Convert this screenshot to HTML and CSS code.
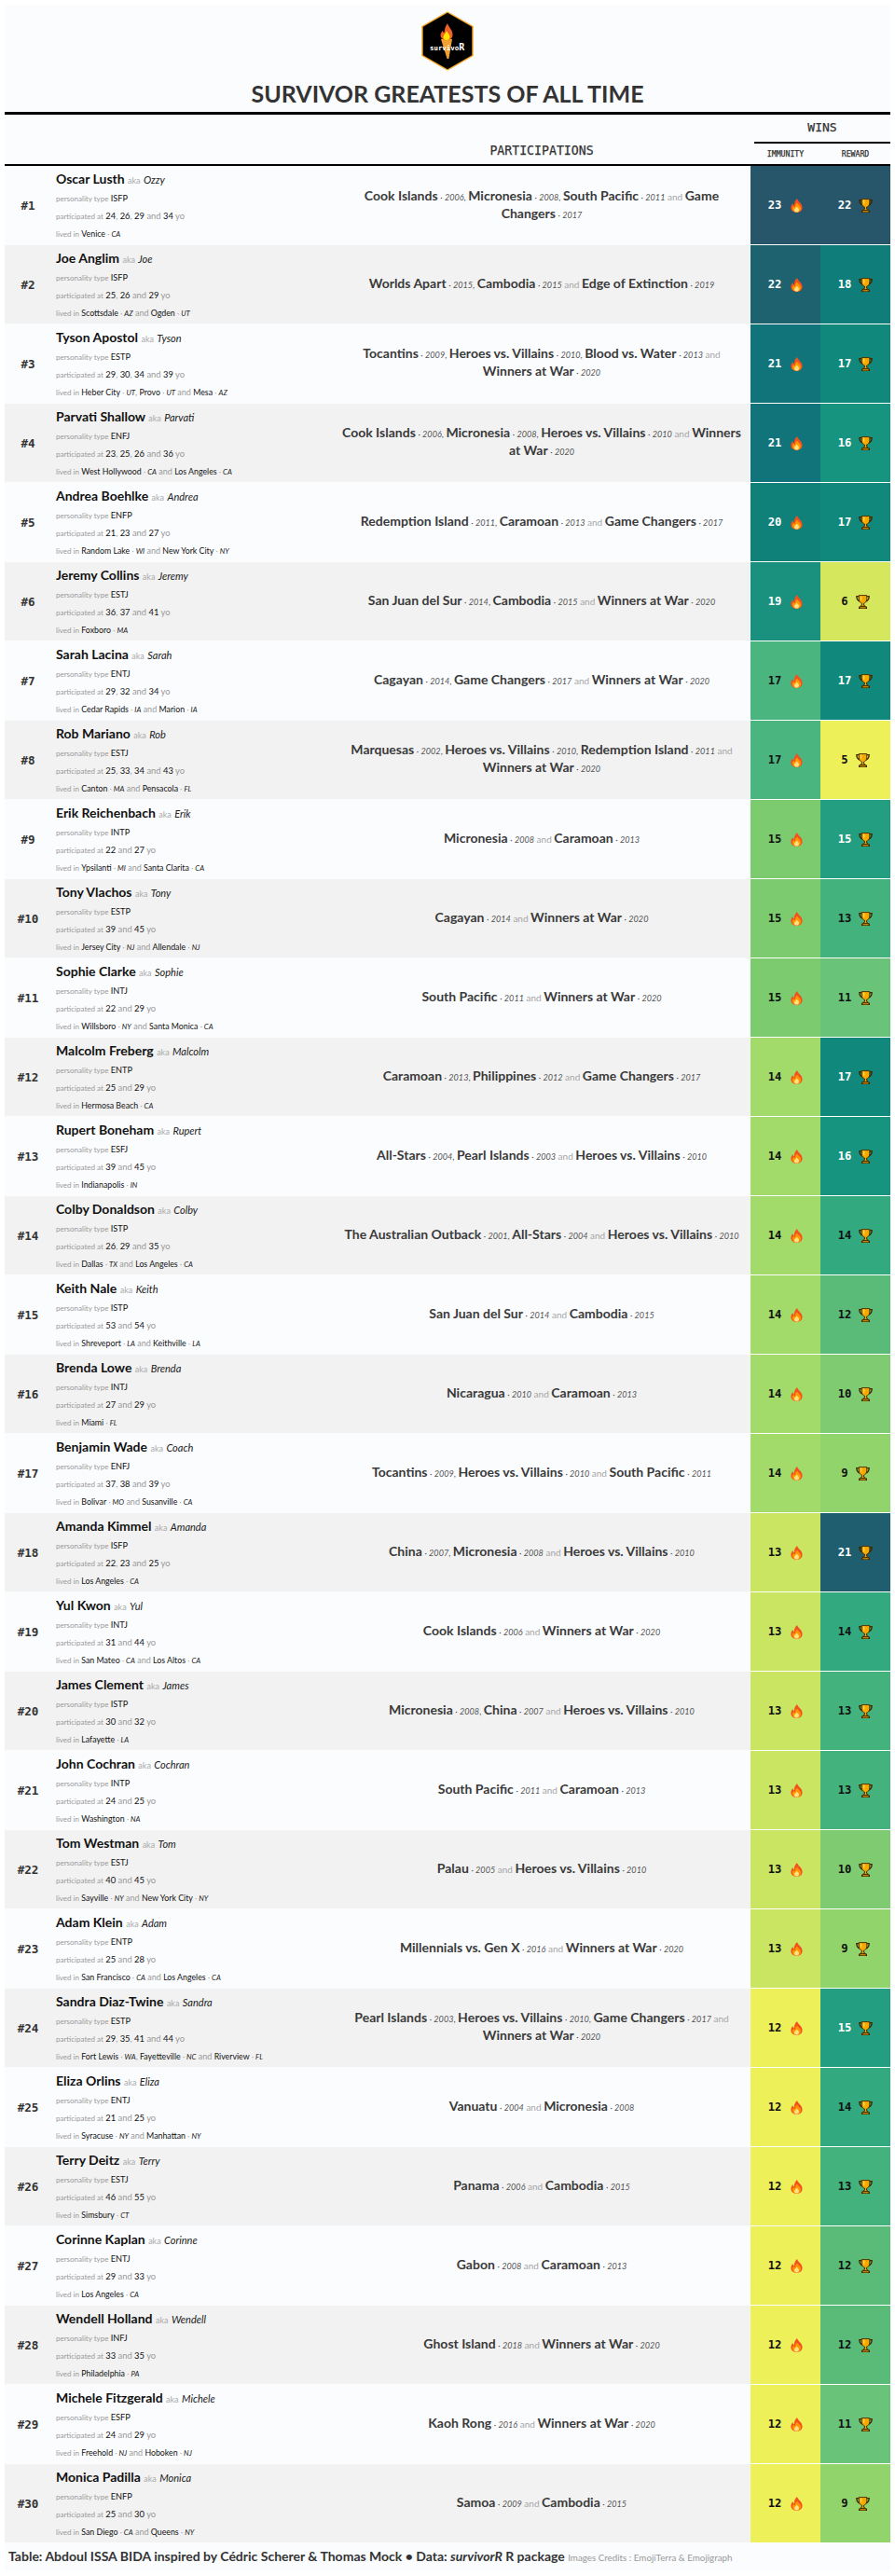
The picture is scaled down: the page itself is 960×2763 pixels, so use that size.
FILE: index.html
```html
<!DOCTYPE html>
<html lang="en">
<head>
    <meta charset="UTF-8">
    <meta name="viewport" content="width=device-width, initial-scale=1.0">
    <title>Survivor Greatests of All Time</title>
    <link rel="stylesheet" href="styles.css">
</head>
<body>
    <svg class="defs" width="0" height="0">
        <symbol id="fire" viewBox="0 0 13 15">
            <path fill="#f4511e" d="M7 0C7.5 3 12.6 5 12.6 9.6 12.6 13 10 15 6.5 15 3 15 .4 13 .4 9.6 .4 7.5 1.5 6 2.5 5 2.5 6.5 3.2 7.2 4 7.3 3.6 4.5 5 1.5 7 0Z"/>
            <path fill="#ff9800" d="M7 4.5C7.6 6.5 11 7.6 11 10.4 11 13 9 14.6 6.5 14.6 4 14.6 2 13 2 10.6 2 9.4 2.6 8.6 3.4 8 3.6 8.8 4.2 9.2 4.8 9.2 4.8 7.4 5.6 5.6 7 4.5Z"/>
            <path fill="#ffe082" d="M6.7 8.6C7 9.8 9 10.4 9 12 9 13.6 7.9 14.6 6.5 14.6 5.1 14.6 4 13.6 4 12.2 4 10.8 5.8 10.2 6.7 8.6Z"/>
        </symbol>
        <symbol id="trophy" viewBox="0 0 15 15">
            <path fill="none" stroke="#3e2700" stroke-width="1.3" d="M3.5 1.6H.8C.8 5 2.4 6.6 4.6 7.2M11.5 1.6H14.2C14.2 5 12.6 6.6 10.4 7.2"/>
            <path fill="#f5a800" stroke="#3e2700" stroke-width=".9" d="M3.2 .6H11.8V4.6C11.8 7.4 9.8 8.8 8.5 9.2V11.2H9.4L10.4 12.6H4.6L5.6 11.2H6.5V9.2C5.2 8.8 3.2 7.4 3.2 4.6Z"/>
            <path fill="#ffd54f" d="M5 1.4H6.4V6.6C5.4 6 5 5 5 4Z"/>
            <rect fill="#3e2700" x="3" y="12.6" width="9" height="2.4"/>
            <rect fill="#f5a800" x="4.4" y="13.3" width="6.2" height="1"/>
        </symbol>
    </svg>

    <div class="panel">
        <div class="heading">
            <svg class="logo" width="56" height="64" viewBox="0 0 56 64">
                <polygon fill="#000" stroke="#f5a623" stroke-width="1.4" points="28,1 55,16.5 55,47.5 28,63 1,47.5 1,16.5"/>
                <path fill="#f0a030" d="M21 30H33L29.4 51H27.6Z"/>
                <path fill="#f0622a" d="M28 13C29 17 33.5 20 33.5 25 33.5 29 31 31 27 31 23 31 20.5 29 20.5 25.5 20.5 23.5 22 22 23 21 23 22.5 24 23 24.6 23 24.6 19.5 26 16 28 13Z"/>
                <path fill="#ffe600" d="M27.2 21C27.6 23 30.5 24.5 30.5 27.5 30.5 30 29 31 27 31 25 31 23.5 30 23.5 27.8 23.5 25.4 26 24 27.2 21Z"/>
                <text class="logo-text" x="9" y="42">survivo<tspan class="logo-r">R</tspan></text>
            </svg>
            <h1>SURVIVOR GREATESTS OF ALL TIME</h1>
        </div>

        <table class="board">
            <colgroup>
                <col class="c-rank"><col class="c-who"><col class="c-part"><col class="c-win"><col class="c-win">
            </colgroup>
            <thead>
                <tr class="head-top">
                    <th rowspan="2"></th>
                    <th rowspan="2"></th>
                    <th rowspan="2" class="head-part">PARTICIPATIONS</th>
                    <th colspan="2" class="head-wins"><span>WINS</span></th>
                </tr>
                <tr class="head-sub">
                    <th>IMMUNITY</th>
                    <th>REWARD</th>
                </tr>
            </thead>
            <tbody>
                <tr>
                    <td class="rank">#1</td>
                    <td class="who"><p class="name">Oscar Lusth <span>aka</span> <em>Ozzy</em></p><p class="line"><small>personality type</small> <b class="type">ISFP</b></p><p class="line ages"><small>participated at</small> <b>24</b>, <b>26</b>, <b>29</b> and <b>34</b> yo</p><p class="line"><small>lived in</small> <b>Venice</b> <small>· <em>CA</em></small></p></td>
                    <td class="part"><b>Cook Islands</b> <small>· <em>2006</em>,</small> <b>Micronesia</b> <small>· <em>2008</em>,</small> <b>South Pacific</b> <small>· <em>2011</em></small> and <b>Game Changers</b> <small>· <em>2017</em></small></td>
                    <td class="win i23">23<svg class="fire"><use href="#fire"/></svg></td>
                    <td class="win r22">22<svg class="trophy"><use href="#trophy"/></svg></td>
                </tr>
                <tr>
                    <td class="rank">#2</td>
                    <td class="who"><p class="name">Joe Anglim <span>aka</span> <em>Joe</em></p><p class="line"><small>personality type</small> <b class="type">ISFP</b></p><p class="line ages"><small>participated at</small> <b>25</b>, <b>26</b> and <b>29</b> yo</p><p class="line"><small>lived in</small> <b>Scottsdale</b> <small>· <em>AZ</em></small> and <b>Ogden</b> <small>· <em>UT</em></small></p></td>
                    <td class="part"><b>Worlds Apart</b> <small>· <em>2015</em>,</small> <b>Cambodia</b> <small>· <em>2015</em></small> and <b>Edge of Extinction</b> <small>· <em>2019</em></small></td>
                    <td class="win i22">22<svg class="fire"><use href="#fire"/></svg></td>
                    <td class="win r18">18<svg class="trophy"><use href="#trophy"/></svg></td>
                </tr>
                <tr>
                    <td class="rank">#3</td>
                    <td class="who"><p class="name">Tyson Apostol <span>aka</span> <em>Tyson</em></p><p class="line"><small>personality type</small> <b class="type">ESTP</b></p><p class="line ages"><small>participated at</small> <b>29</b>, <b>30</b>, <b>34</b> and <b>39</b> yo</p><p class="line"><small>lived in</small> <b>Heber City</b> <small>· <em>UT</em></small>, <b>Provo</b> <small>· <em>UT</em></small> and <b>Mesa</b> <small>· <em>AZ</em></small></p></td>
                    <td class="part"><b>Tocantins</b> <small>· <em>2009</em>,</small> <b>Heroes vs. Villains</b> <small>· <em>2010</em>,</small> <b>Blood vs. Water</b> <small>· <em>2013</em></small> and <b>Winners at War</b> <small>· <em>2020</em></small></td>
                    <td class="win i21">21<svg class="fire"><use href="#fire"/></svg></td>
                    <td class="win r17">17<svg class="trophy"><use href="#trophy"/></svg></td>
                </tr>
                <tr>
                    <td class="rank">#4</td>
                    <td class="who"><p class="name">Parvati Shallow <span>aka</span> <em>Parvati</em></p><p class="line"><small>personality type</small> <b class="type">ENFJ</b></p><p class="line ages"><small>participated at</small> <b>23</b>, <b>25</b>, <b>26</b> and <b>36</b> yo</p><p class="line"><small>lived in</small> <b>West Hollywood</b> <small>· <em>CA</em></small> and <b>Los Angeles</b> <small>· <em>CA</em></small></p></td>
                    <td class="part"><b>Cook Islands</b> <small>· <em>2006</em>,</small> <b>Micronesia</b> <small>· <em>2008</em>,</small> <b>Heroes vs. Villains</b> <small>· <em>2010</em></small> and <b>Winners at War</b> <small>· <em>2020</em></small></td>
                    <td class="win i21">21<svg class="fire"><use href="#fire"/></svg></td>
                    <td class="win r16">16<svg class="trophy"><use href="#trophy"/></svg></td>
                </tr>
                <tr>
                    <td class="rank">#5</td>
                    <td class="who"><p class="name">Andrea Boehlke <span>aka</span> <em>Andrea</em></p><p class="line"><small>personality type</small> <b class="type">ENFP</b></p><p class="line ages"><small>participated at</small> <b>21</b>, <b>23</b> and <b>27</b> yo</p><p class="line"><small>lived in</small> <b>Random Lake</b> <small>· <em>WI</em></small> and <b>New York City</b> <small>· <em>NY</em></small></p></td>
                    <td class="part"><b>Redemption Island</b> <small>· <em>2011</em>,</small> <b>Caramoan</b> <small>· <em>2013</em></small> and <b>Game Changers</b> <small>· <em>2017</em></small></td>
                    <td class="win i20">20<svg class="fire"><use href="#fire"/></svg></td>
                    <td class="win r17">17<svg class="trophy"><use href="#trophy"/></svg></td>
                </tr>
                <tr>
                    <td class="rank">#6</td>
                    <td class="who"><p class="name">Jeremy Collins <span>aka</span> <em>Jeremy</em></p><p class="line"><small>personality type</small> <b class="type">ESTJ</b></p><p class="line ages"><small>participated at</small> <b>36</b>, <b>37</b> and <b>41</b> yo</p><p class="line"><small>lived in</small> <b>Foxboro</b> <small>· <em>MA</em></small></p></td>
                    <td class="part"><b>San Juan del Sur</b> <small>· <em>2014</em>,</small> <b>Cambodia</b> <small>· <em>2015</em></small> and <b>Winners at War</b> <small>· <em>2020</em></small></td>
                    <td class="win i19">19<svg class="fire"><use href="#fire"/></svg></td>
                    <td class="win r6">6<svg class="trophy"><use href="#trophy"/></svg></td>
                </tr>
                <tr>
                    <td class="rank">#7</td>
                    <td class="who"><p class="name">Sarah Lacina <span>aka</span> <em>Sarah</em></p><p class="line"><small>personality type</small> <b class="type">ENTJ</b></p><p class="line ages"><small>participated at</small> <b>29</b>, <b>32</b> and <b>34</b> yo</p><p class="line"><small>lived in</small> <b>Cedar Rapids</b> <small>· <em>IA</em></small> and <b>Marion</b> <small>· <em>IA</em></small></p></td>
                    <td class="part"><b>Cagayan</b> <small>· <em>2014</em>,</small> <b>Game Changers</b> <small>· <em>2017</em></small> and <b>Winners at War</b> <small>· <em>2020</em></small></td>
                    <td class="win i17">17<svg class="fire"><use href="#fire"/></svg></td>
                    <td class="win r17">17<svg class="trophy"><use href="#trophy"/></svg></td>
                </tr>
                <tr>
                    <td class="rank">#8</td>
                    <td class="who"><p class="name">Rob Mariano <span>aka</span> <em>Rob</em></p><p class="line"><small>personality type</small> <b class="type">ESTJ</b></p><p class="line ages"><small>participated at</small> <b>25</b>, <b>33</b>, <b>34</b> and <b>43</b> yo</p><p class="line"><small>lived in</small> <b>Canton</b> <small>· <em>MA</em></small> and <b>Pensacola</b> <small>· <em>FL</em></small></p></td>
                    <td class="part"><b>Marquesas</b> <small>· <em>2002</em>,</small> <b>Heroes vs. Villains</b> <small>· <em>2010</em>,</small> <b>Redemption Island</b> <small>· <em>2011</em></small> and <b>Winners at War</b> <small>· <em>2020</em></small></td>
                    <td class="win i17">17<svg class="fire"><use href="#fire"/></svg></td>
                    <td class="win r5">5<svg class="trophy"><use href="#trophy"/></svg></td>
                </tr>
                <tr>
                    <td class="rank">#9</td>
                    <td class="who"><p class="name">Erik Reichenbach <span>aka</span> <em>Erik</em></p><p class="line"><small>personality type</small> <b class="type">INTP</b></p><p class="line ages"><small>participated at</small> <b>22</b> and <b>27</b> yo</p><p class="line"><small>lived in</small> <b>Ypsilanti</b> <small>· <em>MI</em></small> and <b>Santa Clarita</b> <small>· <em>CA</em></small></p></td>
                    <td class="part"><b>Micronesia</b> <small>· <em>2008</em></small> and <b>Caramoan</b> <small>· <em>2013</em></small></td>
                    <td class="win i15">15<svg class="fire"><use href="#fire"/></svg></td>
                    <td class="win r15">15<svg class="trophy"><use href="#trophy"/></svg></td>
                </tr>
                <tr>
                    <td class="rank">#10</td>
                    <td class="who"><p class="name">Tony Vlachos <span>aka</span> <em>Tony</em></p><p class="line"><small>personality type</small> <b class="type">ESTP</b></p><p class="line ages"><small>participated at</small> <b>39</b> and <b>45</b> yo</p><p class="line"><small>lived in</small> <b>Jersey City</b> <small>· <em>NJ</em></small> and <b>Allendale</b> <small>· <em>NJ</em></small></p></td>
                    <td class="part"><b>Cagayan</b> <small>· <em>2014</em></small> and <b>Winners at War</b> <small>· <em>2020</em></small></td>
                    <td class="win i15">15<svg class="fire"><use href="#fire"/></svg></td>
                    <td class="win r13">13<svg class="trophy"><use href="#trophy"/></svg></td>
                </tr>
                <tr>
                    <td class="rank">#11</td>
                    <td class="who"><p class="name">Sophie Clarke <span>aka</span> <em>Sophie</em></p><p class="line"><small>personality type</small> <b class="type">INTJ</b></p><p class="line ages"><small>participated at</small> <b>22</b> and <b>29</b> yo</p><p class="line"><small>lived in</small> <b>Willsboro</b> <small>· <em>NY</em></small> and <b>Santa Monica</b> <small>· <em>CA</em></small></p></td>
                    <td class="part"><b>South Pacific</b> <small>· <em>2011</em></small> and <b>Winners at War</b> <small>· <em>2020</em></small></td>
                    <td class="win i15">15<svg class="fire"><use href="#fire"/></svg></td>
                    <td class="win r11">11<svg class="trophy"><use href="#trophy"/></svg></td>
                </tr>
                <tr>
                    <td class="rank">#12</td>
                    <td class="who"><p class="name">Malcolm Freberg <span>aka</span> <em>Malcolm</em></p><p class="line"><small>personality type</small> <b class="type">ENTP</b></p><p class="line ages"><small>participated at</small> <b>25</b> and <b>29</b> yo</p><p class="line"><small>lived in</small> <b>Hermosa Beach</b> <small>· <em>CA</em></small></p></td>
                    <td class="part"><b>Caramoan</b> <small>· <em>2013</em>,</small> <b>Philippines</b> <small>· <em>2012</em></small> and <b>Game Changers</b> <small>· <em>2017</em></small></td>
                    <td class="win i14">14<svg class="fire"><use href="#fire"/></svg></td>
                    <td class="win r17">17<svg class="trophy"><use href="#trophy"/></svg></td>
                </tr>
                <tr>
                    <td class="rank">#13</td>
                    <td class="who"><p class="name">Rupert Boneham <span>aka</span> <em>Rupert</em></p><p class="line"><small>personality type</small> <b class="type">ESFJ</b></p><p class="line ages"><small>participated at</small> <b>39</b> and <b>45</b> yo</p><p class="line"><small>lived in</small> <b>Indianapolis</b> <small>· <em>IN</em></small></p></td>
                    <td class="part"><b>All-Stars</b> <small>· <em>2004</em>,</small> <b>Pearl Islands</b> <small>· <em>2003</em></small> and <b>Heroes vs. Villains</b> <small>· <em>2010</em></small></td>
                    <td class="win i14">14<svg class="fire"><use href="#fire"/></svg></td>
                    <td class="win r16">16<svg class="trophy"><use href="#trophy"/></svg></td>
                </tr>
                <tr>
                    <td class="rank">#14</td>
                    <td class="who"><p class="name">Colby Donaldson <span>aka</span> <em>Colby</em></p><p class="line"><small>personality type</small> <b class="type">ISTP</b></p><p class="line ages"><small>participated at</small> <b>26</b>, <b>29</b> and <b>35</b> yo</p><p class="line"><small>lived in</small> <b>Dallas</b> <small>· <em>TX</em></small> and <b>Los Angeles</b> <small>· <em>CA</em></small></p></td>
                    <td class="part"><b>The Australian Outback</b> <small>· <em>2001</em>,</small> <b>All-Stars</b> <small>· <em>2004</em></small> and <b>Heroes vs. Villains</b> <small>· <em>2010</em></small></td>
                    <td class="win i14">14<svg class="fire"><use href="#fire"/></svg></td>
                    <td class="win r14">14<svg class="trophy"><use href="#trophy"/></svg></td>
                </tr>
                <tr>
                    <td class="rank">#15</td>
                    <td class="who"><p class="name">Keith Nale <span>aka</span> <em>Keith</em></p><p class="line"><small>personality type</small> <b class="type">ISTP</b></p><p class="line ages"><small>participated at</small> <b>53</b> and <b>54</b> yo</p><p class="line"><small>lived in</small> <b>Shreveport</b> <small>· <em>LA</em></small> and <b>Keithville</b> <small>· <em>LA</em></small></p></td>
                    <td class="part"><b>San Juan del Sur</b> <small>· <em>2014</em></small> and <b>Cambodia</b> <small>· <em>2015</em></small></td>
                    <td class="win i14">14<svg class="fire"><use href="#fire"/></svg></td>
                    <td class="win r12">12<svg class="trophy"><use href="#trophy"/></svg></td>
                </tr>
                <tr>
                    <td class="rank">#16</td>
                    <td class="who"><p class="name">Brenda Lowe <span>aka</span> <em>Brenda</em></p><p class="line"><small>personality type</small> <b class="type">INTJ</b></p><p class="line ages"><small>participated at</small> <b>27</b> and <b>29</b> yo</p><p class="line"><small>lived in</small> <b>Miami</b> <small>· <em>FL</em></small></p></td>
                    <td class="part"><b>Nicaragua</b> <small>· <em>2010</em></small> and <b>Caramoan</b> <small>· <em>2013</em></small></td>
                    <td class="win i14">14<svg class="fire"><use href="#fire"/></svg></td>
                    <td class="win r10">10<svg class="trophy"><use href="#trophy"/></svg></td>
                </tr>
                <tr>
                    <td class="rank">#17</td>
                    <td class="who"><p class="name">Benjamin Wade <span>aka</span> <em>Coach</em></p><p class="line"><small>personality type</small> <b class="type">ENFJ</b></p><p class="line ages"><small>participated at</small> <b>37</b>, <b>38</b> and <b>39</b> yo</p><p class="line"><small>lived in</small> <b>Bolivar</b> <small>· <em>MO</em></small> and <b>Susanville</b> <small>· <em>CA</em></small></p></td>
                    <td class="part"><b>Tocantins</b> <small>· <em>2009</em>,</small> <b>Heroes vs. Villains</b> <small>· <em>2010</em></small> and <b>South Pacific</b> <small>· <em>2011</em></small></td>
                    <td class="win i14">14<svg class="fire"><use href="#fire"/></svg></td>
                    <td class="win r9">9<svg class="trophy"><use href="#trophy"/></svg></td>
                </tr>
                <tr>
                    <td class="rank">#18</td>
                    <td class="who"><p class="name">Amanda Kimmel <span>aka</span> <em>Amanda</em></p><p class="line"><small>personality type</small> <b class="type">ISFP</b></p><p class="line ages"><small>participated at</small> <b>22</b>, <b>23</b> and <b>25</b> yo</p><p class="line"><small>lived in</small> <b>Los Angeles</b> <small>· <em>CA</em></small></p></td>
                    <td class="part"><b>China</b> <small>· <em>2007</em>,</small> <b>Micronesia</b> <small>· <em>2008</em></small> and <b>Heroes vs. Villains</b> <small>· <em>2010</em></small></td>
                    <td class="win i13">13<svg class="fire"><use href="#fire"/></svg></td>
                    <td class="win r21">21<svg class="trophy"><use href="#trophy"/></svg></td>
                </tr>
                <tr>
                    <td class="rank">#19</td>
                    <td class="who"><p class="name">Yul Kwon <span>aka</span> <em>Yul</em></p><p class="line"><small>personality type</small> <b class="type">INTJ</b></p><p class="line ages"><small>participated at</small> <b>31</b> and <b>44</b> yo</p><p class="line"><small>lived in</small> <b>San Mateo</b> <small>· <em>CA</em></small> and <b>Los Altos</b> <small>· <em>CA</em></small></p></td>
                    <td class="part"><b>Cook Islands</b> <small>· <em>2006</em></small> and <b>Winners at War</b> <small>· <em>2020</em></small></td>
                    <td class="win i13">13<svg class="fire"><use href="#fire"/></svg></td>
                    <td class="win r14">14<svg class="trophy"><use href="#trophy"/></svg></td>
                </tr>
                <tr>
                    <td class="rank">#20</td>
                    <td class="who"><p class="name">James Clement <span>aka</span> <em>James</em></p><p class="line"><small>personality type</small> <b class="type">ISTP</b></p><p class="line ages"><small>participated at</small> <b>30</b> and <b>32</b> yo</p><p class="line"><small>lived in</small> <b>Lafayette</b> <small>· <em>LA</em></small></p></td>
                    <td class="part"><b>Micronesia</b> <small>· <em>2008</em>,</small> <b>China</b> <small>· <em>2007</em></small> and <b>Heroes vs. Villains</b> <small>· <em>2010</em></small></td>
                    <td class="win i13">13<svg class="fire"><use href="#fire"/></svg></td>
                    <td class="win r13">13<svg class="trophy"><use href="#trophy"/></svg></td>
                </tr>
                <tr>
                    <td class="rank">#21</td>
                    <td class="who"><p class="name">John Cochran <span>aka</span> <em>Cochran</em></p><p class="line"><small>personality type</small> <b class="type">INTP</b></p><p class="line ages"><small>participated at</small> <b>24</b> and <b>25</b> yo</p><p class="line"><small>lived in</small> <b>Washington</b> <small>· <em>NA</em></small></p></td>
                    <td class="part"><b>South Pacific</b> <small>· <em>2011</em></small> and <b>Caramoan</b> <small>· <em>2013</em></small></td>
                    <td class="win i13">13<svg class="fire"><use href="#fire"/></svg></td>
                    <td class="win r13">13<svg class="trophy"><use href="#trophy"/></svg></td>
                </tr>
                <tr>
                    <td class="rank">#22</td>
                    <td class="who"><p class="name">Tom Westman <span>aka</span> <em>Tom</em></p><p class="line"><small>personality type</small> <b class="type">ESTJ</b></p><p class="line ages"><small>participated at</small> <b>40</b> and <b>45</b> yo</p><p class="line"><small>lived in</small> <b>Sayville</b> <small>· <em>NY</em></small> and <b>New York City</b> <small>· <em>NY</em></small></p></td>
                    <td class="part"><b>Palau</b> <small>· <em>2005</em></small> and <b>Heroes vs. Villains</b> <small>· <em>2010</em></small></td>
                    <td class="win i13">13<svg class="fire"><use href="#fire"/></svg></td>
                    <td class="win r10">10<svg class="trophy"><use href="#trophy"/></svg></td>
                </tr>
                <tr>
                    <td class="rank">#23</td>
                    <td class="who"><p class="name">Adam Klein <span>aka</span> <em>Adam</em></p><p class="line"><small>personality type</small> <b class="type">ENTP</b></p><p class="line ages"><small>participated at</small> <b>25</b> and <b>28</b> yo</p><p class="line"><small>lived in</small> <b>San Francisco</b> <small>· <em>CA</em></small> and <b>Los Angeles</b> <small>· <em>CA</em></small></p></td>
                    <td class="part"><b>Millennials vs. Gen X</b> <small>· <em>2016</em></small> and <b>Winners at War</b> <small>· <em>2020</em></small></td>
                    <td class="win i13">13<svg class="fire"><use href="#fire"/></svg></td>
                    <td class="win r9">9<svg class="trophy"><use href="#trophy"/></svg></td>
                </tr>
                <tr>
                    <td class="rank">#24</td>
                    <td class="who"><p class="name">Sandra Diaz-Twine <span>aka</span> <em>Sandra</em></p><p class="line"><small>personality type</small> <b class="type">ESTP</b></p><p class="line ages"><small>participated at</small> <b>29</b>, <b>35</b>, <b>41</b> and <b>44</b> yo</p><p class="line"><small>lived in</small> <b>Fort Lewis</b> <small>· <em>WA</em></small>, <b>Fayetteville</b> <small>· <em>NC</em></small> and <b>Riverview</b> <small>· <em>FL</em></small></p></td>
                    <td class="part"><b>Pearl Islands</b> <small>· <em>2003</em>,</small> <b>Heroes vs. Villains</b> <small>· <em>2010</em>,</small> <b>Game Changers</b> <small>· <em>2017</em></small> and <b>Winners at War</b> <small>· <em>2020</em></small></td>
                    <td class="win i12">12<svg class="fire"><use href="#fire"/></svg></td>
                    <td class="win r15">15<svg class="trophy"><use href="#trophy"/></svg></td>
                </tr>
                <tr>
                    <td class="rank">#25</td>
                    <td class="who"><p class="name">Eliza Orlins <span>aka</span> <em>Eliza</em></p><p class="line"><small>personality type</small> <b class="type">ENTJ</b></p><p class="line ages"><small>participated at</small> <b>21</b> and <b>25</b> yo</p><p class="line"><small>lived in</small> <b>Syracuse</b> <small>· <em>NY</em></small> and <b>Manhattan</b> <small>· <em>NY</em></small></p></td>
                    <td class="part"><b>Vanuatu</b> <small>· <em>2004</em></small> and <b>Micronesia</b> <small>· <em>2008</em></small></td>
                    <td class="win i12">12<svg class="fire"><use href="#fire"/></svg></td>
                    <td class="win r14">14<svg class="trophy"><use href="#trophy"/></svg></td>
                </tr>
                <tr>
                    <td class="rank">#26</td>
                    <td class="who"><p class="name">Terry Deitz <span>aka</span> <em>Terry</em></p><p class="line"><small>personality type</small> <b class="type">ESTJ</b></p><p class="line ages"><small>participated at</small> <b>46</b> and <b>55</b> yo</p><p class="line"><small>lived in</small> <b>Simsbury</b> <small>· <em>CT</em></small></p></td>
                    <td class="part"><b>Panama</b> <small>· <em>2006</em></small> and <b>Cambodia</b> <small>· <em>2015</em></small></td>
                    <td class="win i12">12<svg class="fire"><use href="#fire"/></svg></td>
                    <td class="win r13">13<svg class="trophy"><use href="#trophy"/></svg></td>
                </tr>
                <tr>
                    <td class="rank">#27</td>
                    <td class="who"><p class="name">Corinne Kaplan <span>aka</span> <em>Corinne</em></p><p class="line"><small>personality type</small> <b class="type">ENTJ</b></p><p class="line ages"><small>participated at</small> <b>29</b> and <b>33</b> yo</p><p class="line"><small>lived in</small> <b>Los Angeles</b> <small>· <em>CA</em></small></p></td>
                    <td class="part"><b>Gabon</b> <small>· <em>2008</em></small> and <b>Caramoan</b> <small>· <em>2013</em></small></td>
                    <td class="win i12">12<svg class="fire"><use href="#fire"/></svg></td>
                    <td class="win r12">12<svg class="trophy"><use href="#trophy"/></svg></td>
                </tr>
                <tr>
                    <td class="rank">#28</td>
                    <td class="who"><p class="name">Wendell Holland <span>aka</span> <em>Wendell</em></p><p class="line"><small>personality type</small> <b class="type">INFJ</b></p><p class="line ages"><small>participated at</small> <b>33</b> and <b>35</b> yo</p><p class="line"><small>lived in</small> <b>Philadelphia</b> <small>· <em>PA</em></small></p></td>
                    <td class="part"><b>Ghost Island</b> <small>· <em>2018</em></small> and <b>Winners at War</b> <small>· <em>2020</em></small></td>
                    <td class="win i12">12<svg class="fire"><use href="#fire"/></svg></td>
                    <td class="win r12">12<svg class="trophy"><use href="#trophy"/></svg></td>
                </tr>
                <tr>
                    <td class="rank">#29</td>
                    <td class="who"><p class="name">Michele Fitzgerald <span>aka</span> <em>Michele</em></p><p class="line"><small>personality type</small> <b class="type">ESFP</b></p><p class="line ages"><small>participated at</small> <b>24</b> and <b>29</b> yo</p><p class="line"><small>lived in</small> <b>Freehold</b> <small>· <em>NJ</em></small> and <b>Hoboken</b> <small>· <em>NJ</em></small></p></td>
                    <td class="part"><b>Kaoh Rong</b> <small>· <em>2016</em></small> and <b>Winners at War</b> <small>· <em>2020</em></small></td>
                    <td class="win i12">12<svg class="fire"><use href="#fire"/></svg></td>
                    <td class="win r11">11<svg class="trophy"><use href="#trophy"/></svg></td>
                </tr>
                <tr>
                    <td class="rank">#30</td>
                    <td class="who"><p class="name">Monica Padilla <span>aka</span> <em>Monica</em></p><p class="line"><small>personality type</small> <b class="type">ENFP</b></p><p class="line ages"><small>participated at</small> <b>25</b> and <b>30</b> yo</p><p class="line"><small>lived in</small> <b>San Diego</b> <small>· <em>CA</em></small> and <b>Queens</b> <small>· <em>NY</em></small></p></td>
                    <td class="part"><b>Samoa</b> <small>· <em>2009</em></small> and <b>Cambodia</b> <small>· <em>2015</em></small></td>
                    <td class="win i12">12<svg class="fire"><use href="#fire"/></svg></td>
                    <td class="win r9">9<svg class="trophy"><use href="#trophy"/></svg></td>
                </tr>
            </tbody>
        </table>

        <div class="source">Table: Abdoul ISSA BIDA inspired by Cédric Scherer &amp; Thomas Mock • Data: <em>survivorR</em> R package <span>Images Credits : EmojiTerra &amp; Emojigraph</span></div>
    </div>
</body>
</html>
```

FILE: styles.css
```css
body {
    margin: 5px;
    background-color: white;
    font-family: Lato, "Liberation Sans", sans-serif;
}
.defs {
    position: absolute;
}
.panel {
    background-color: #fbfcfe;
    width: 950px;
    height: 2753px;
}
.heading {
    height: 115px;
    display: flex;
    flex-direction: column;
    align-items: center;
    padding-top: 7px;
    box-sizing: border-box;
}
.logo {
    display: block;
}
.logo-text {
    font-family: "DejaVu Sans Mono", monospace;
    font-weight: bold;
    font-size: 7.4px;
    fill: white;
}
.logo-r {
    font-size: 10px;
}
h1 {
    margin: 8px 0 0;
    font-size: 25px;
    line-height: 32px;
    font-weight: bold;
    color: #333;
}
.board {
    width: 950px;
    table-layout: fixed;
    border-collapse: separate;
    border-spacing: 0;
}
.c-rank {
    width: 50px;
}
.c-who {
    width: 302px;
}
.c-win {
    width: 75px;
}
thead th {
    padding: 0;
    font-family: "DejaVu Sans Mono", monospace;
    font-weight: normal;
    color: #333;
    -webkit-text-stroke: 0.25px #333;
}
.head-top th {
    border-top: 3px solid black;
    height: 31px;
}
.head-sub th {
    height: 22px;
    font-size: 8.2px;
    border-bottom: 2px solid black;
}
.head-top th[rowspan] {
    border-bottom: 2px solid black;
}
.head-part {
    font-size: 13.2px;
    vertical-align: bottom;
    padding-bottom: 7px;
}
.head-wins {
    font-size: 13px;
    vertical-align: top;
}
.head-wins span {
    display: block;
    margin-left: 4px;
    height: 31px;
    line-height: 27px;
    border-bottom: 2px solid black;
    box-sizing: border-box;
}
tbody tr {
    height: 84px;
}
tbody tr:nth-child(odd) {
    height: 86px;
}
tbody tr:first-child {
    height: 85px;
}
tbody tr:nth-child(even) td:not(.win) {
    background-color: #f2f2f2;
}
td {
    padding: 0;
    box-sizing: border-box;
}
.rank {
    text-align: center;
    font-family: "DejaVu Sans Mono", monospace;
    font-weight: bold;
    font-size: 12.6px;
    color: #333;
}
.who {
    padding-left: 5px;
    white-space: nowrap;
}
.who p {
    margin: 0;
}
.name {
    font-size: 14px;
    line-height: 22px;
    font-weight: bold;
    color: #111;
}
.name span {
    font-size: 9px;
    line-height: 1;
    font-weight: normal;
    color: #aaa;
}
.name em {
    font-size: 11px;
    line-height: 1;
    font-weight: normal;
    color: #222;
}
.line {
    font-size: 9px;
    line-height: 19px;
    color: #999;
}
.line small {
    font-size: 8px;
    line-height: 1;
}
.line small em {
    color: #222;
    font-size: 7.8px;
}
.line b {
    font-weight: normal;
    color: #111;
    font-size: 8.8px;
    line-height: 1;
}
.line .type {
    font-size: 9.2px;
}
.ages,
.line.ages b {
    font-size: 9.4px;
}
.part {
    padding: 0 5px;
    text-align: center;
    font-size: 10px;
    line-height: 19px;
    color: #a5a5a5;
}
.part b {
    font-size: 14px;
    line-height: 1;
    color: #3a3a3a;
}
.part small {
    font-size: 9.1px;
    line-height: 1;
    color: #555;
}
.part small em {
    color: #555;
}
.win {
    text-align: center;
    font-family: "DejaVu Sans Mono", monospace;
    font-weight: bold;
    font-size: 12.2px;
    color: #111;
}
tbody tr:nth-child(odd) .win {
    border-top: 1px solid white;
    border-bottom: 1px solid white;
}
tbody tr:first-child .win {
    border-top: none;
}
.fire {
    width: 13px;
    height: 15px;
    margin-left: 10px;
    vertical-align: -4px;
}
.trophy {
    width: 15px;
    height: 15px;
    margin-left: 8px;
    vertical-align: -4px;
}

/* colour scale, immunity */
.i23 { background-color: #27566b; color: white; }
.i22 { background-color: #1e6270; color: white; }
.i21 { background-color: #10747a; color: white; }
.i20 { background-color: #0f8179; color: white; }
.i19 { background-color: #1a917e; color: white; }
.i17 { background-color: #4bb57f; }
.i15 { background-color: #7dcb6f; }
.i14 { background-color: #a3db6b; }
.i13 { background-color: #c9e562; }
.i12 { background-color: #eef05a; }

/* colour scale, reward */
.r22 { background-color: #27566b; color: white; }
.r21 { background-color: #1f5e6e; color: white; }
.r18 { background-color: #0f7d79; color: white; }
.r17 { background-color: #10887c; color: white; }
.r16 { background-color: #169480; color: white; }
.r15 { background-color: #249e80; color: white; }
.r14 { background-color: #32a97e; }
.r13 { background-color: #44b27c; }
.r12 { background-color: #5abb79; }
.r11 { background-color: #69c379; }
.r10 { background-color: #7fcb71; }
.r9 { background-color: #92d46c; }
.r6 { background-color: #d5e75c; }
.r5 { background-color: #eef05a; }

.source {
    padding: 4px 0 0 4px;
    font-size: 14px;
    line-height: 22px;
    font-weight: bold;
    color: #333;
}
.source span {
    font-size: 9.8px;
    font-weight: normal;
    color: #999;
}
```
